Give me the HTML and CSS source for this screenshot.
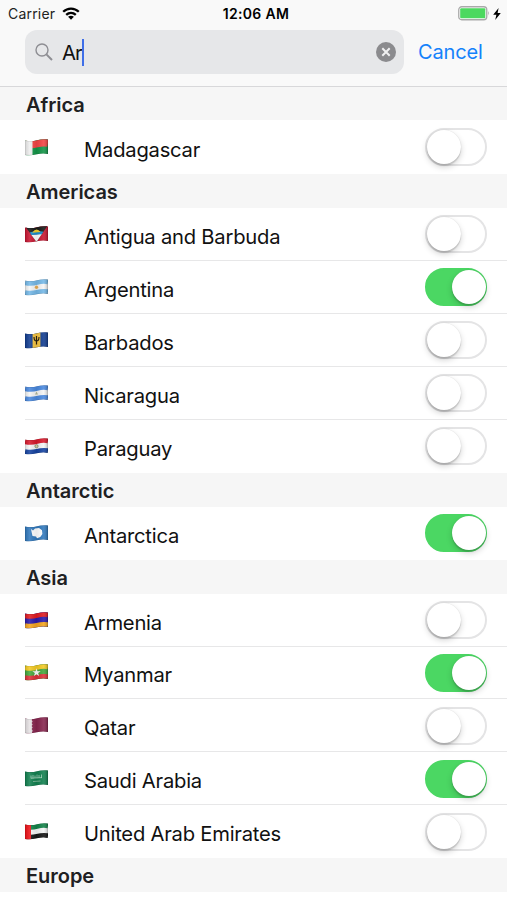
FILE: index.html
```html
<!DOCTYPE html>
<html lang="en">
<head>
<meta charset="utf-8">
<title>Countries</title>
<link rel="stylesheet" href="styles.css">
</head>
<body>
<svg class="defs" aria-hidden="true">
  <defs>
    <clipPath id="cloth"><path d="M0 1.5C4 2.3 8 2.3 12 1.2S20 0 23 .6V15C20 14.2 16 14.2 12 15.2S4 16.8 0 16Z"/></clipPath>
    <linearGradient id="shade"><stop offset="0" stop-color="#000" stop-opacity=".12"/><stop offset=".2" stop-color="#fff" stop-opacity=".12"/><stop offset=".5" stop-color="#000" stop-opacity=".08"/><stop offset=".8" stop-color="#fff" stop-opacity=".1"/><stop offset="1" stop-color="#000" stop-opacity=".25"/></linearGradient>
    <path id="wave" d="M0 0C4 .8 8 .8 12-.3S20-1.5 23-.9" fill="none"/>
    <g id="fold"><path d="M0 0H23V17H0Z" fill="url(#shade)"/><path d="M0 1.5C4 2.3 8 2.3 12 1.2S20 0 23 .6V15C20 14.2 16 14.2 12 15.2S4 16.8 0 16Z" fill="none" stroke="#000" stroke-opacity=".2" stroke-width=".7"/></g>
  </defs>
</svg>
<header class="top">
  <div class="status">
    <div class="carrier"><span class="carrier-name">Carrier</span>
      <svg class="wifi" viewBox="0 0 18 13"><g fill="none" stroke="#000" stroke-width="2.3"><path d="M1.2 4.8C5.6.5 12.4.5 16.8 4.8"/><path d="M4.2 7.9C7 5.3 11 5.3 13.8 7.9"/></g><path d="M6.1 9.8C7.8 8.4 10.2 8.4 11.9 9.8L9 12.7Z"/></svg>
    </div>
    <div class="clock">12:06 AM</div>
    <div class="power">
      <svg class="battery" viewBox="0 0 32 15"><rect x=".75" y=".75" width="28" height="13" rx="3" fill="#fff" stroke="#a9a9a9" stroke-width="1.3"/><rect x="2.2" y="2.2" width="25.1" height="10.1" rx="1" fill="#4cd95f"/><path d="M30.2 5Q32 7.2 30.2 9.5Z" fill="#a9a9a9"/></svg>
      <svg class="bolt" viewBox="0 0 8 12"><path d="M5.6 0L.2 6.8H3.4L2.2 12L7.8 5H4.6Z"/></svg>
    </div>
  </div>
  <div class="search">
    <div class="field">
      <svg class="glass" viewBox="0 0 18 18"><g fill="none" stroke="#8e8e93" stroke-width="1.4"><circle cx="7" cy="7" r="6"/><path d="M11.4 11.4L17 17" stroke-width="2"/></g></svg>
      <span class="query">Ar</span><i class="caret"></i>
      <svg class="clear" viewBox="0 0 20 20"><circle cx="10" cy="10" r="10" fill="#8b8b8e"/><path d="M6.3 6.3L13.7 13.7M13.7 6.3L6.3 13.7" stroke="#f1f1f2" stroke-width="2"/></svg>
    </div>
    <a class="cancel">Cancel</a>
  </div>
</header>
<main>
  <section>
    <h2>Africa</h2>
    <div class="row"><svg class="flag" viewBox="0 0 23 17"><g clip-path="url(#cloth)"><path d="M0 0H23V17H0Z" fill="#139548"/><use href="#wave" y="5" stroke="#f44444" stroke-width="7.5"/><path d="M0 0H7.5V17H0Z" fill="#eee"/><use href="#fold"/></g></svg><span class="name">Madagascar</span><i class="switch"></i></div>
  </section>
  <section>
    <h2>Americas</h2>
    <div class="row"><svg class="flag" viewBox="0 0 23 17"><g clip-path="url(#cloth)"><path d="M0 0H23V17H0Z" fill="#c91531"/><path d="M1 1.5L11.5 16L22 .5V0H1Z" fill="#171817"/><path d="M6.2 8.8L11.5 16L17 7.8Z" fill="#fff"/><path d="M4.8 6.5Q11.5 4 18.4 5.8L16.8 8.3L6.3 9Z" fill="#168dce"/><path d="M7.2 6.7Q11.5.5 15.5 6Z" fill="#f4cf28"/><use href="#fold"/></g></svg><span class="name">Antigua and Barbuda</span><i class="switch"></i></div>
    <div class="row"><svg class="flag" viewBox="0 0 23 17"><g clip-path="url(#cloth)"><path d="M0 0H23V17H0Z" fill="#f4f5f5"/><g stroke="#75b9e8" stroke-width="4.8"><use href="#wave" y="3.7"/><use href="#wave" y="13.7"/></g><circle cx="11.5" cy="8.3" r="1.7" fill="#e8ae55"/><use href="#fold"/></g></svg><span class="name">Argentina</span><i class="switch on"></i></div>
    <div class="row"><svg class="flag" viewBox="0 0 23 17"><g clip-path="url(#cloth)"><path d="M0 0H23V17H0Z" fill="#123d91"/><path d="M7.6 0H15.4V17H7.6Z" fill="#f5c543"/><path d="M9 5Q9 9 11.5 9T14 5M11.5 4V12.5" fill="none" stroke="#292010" stroke-width="1.2"/><use href="#fold"/></g></svg><span class="name">Barbados</span><i class="switch"></i></div>
    <div class="row"><svg class="flag" viewBox="0 0 23 17"><g clip-path="url(#cloth)"><path d="M0 0H23V17H0Z" fill="#f4f5f5"/><g stroke="#4a89df" stroke-width="4.8"><use href="#wave" y="3.7"/><use href="#wave" y="13.7"/></g><path d="M11.5 6.6L13 9.4H10Z" fill="#b1b99a"/><use href="#fold"/></g></svg><span class="name">Nicaragua</span><i class="switch"></i></div>
    <div class="row"><svg class="flag" viewBox="0 0 23 17"><g clip-path="url(#cloth)"><path d="M0 0H23V17H0Z" fill="#f4f5f5"/><use href="#wave" y="3.7" stroke="#d7192c" stroke-width="4.8"/><use href="#wave" y="13.7" stroke="#1644a2" stroke-width="4.8"/><circle cx="11.5" cy="8.2" r="1.6" fill="#ddd8a7" stroke="#777964" stroke-width=".7"/><use href="#fold"/></g></svg><span class="name">Paraguay</span><i class="switch"></i></div>
  </section>
  <section>
    <h2>Antarctic</h2>
    <div class="row"><svg class="flag" viewBox="0 0 23 17"><g clip-path="url(#cloth)"><path d="M0 0H23V17H0Z" fill="#3179bd"/><path d="M6 4L8 5.5L10 3.6L14 3L17 5.2L17.4 9L15.3 12L12 13.2L11 11.5L7.5 11L6.8 8Z" fill="#fff"/><use href="#fold"/></g></svg><span class="name">Antarctica</span><i class="switch on"></i></div>
  </section>
  <section>
    <h2>Asia</h2>
    <div class="row"><svg class="flag" viewBox="0 0 23 17"><g clip-path="url(#cloth)"><path d="M0 0H23V17H0Z" fill="#2b1aab"/><use href="#wave" y="3.7" stroke="#e11b22" stroke-width="4.8"/><use href="#wave" y="13.7" stroke="#f5a51f" stroke-width="4.8"/><use href="#fold"/></g></svg><span class="name">Armenia</span><i class="switch"></i></div>
    <div class="row"><svg class="flag" viewBox="0 0 23 17"><g clip-path="url(#cloth)"><path d="M0 0H23V17H0Z" fill="#45a83c"/><use href="#wave" y="3.7" stroke="#f4cb24" stroke-width="4.8"/><use href="#wave" y="13.7" stroke="#df3039" stroke-width="4.8"/><path d="M11.5 4.3L12.5 7.2H15.7L13.1 9L14.1 12.1L11.5 10.3L8.9 12.1L9.9 9L7.3 7.2H10.5Z" fill="#fff"/><use href="#fold"/></g></svg><span class="name">Myanmar</span><i class="switch on"></i></div>
    <div class="row"><svg class="flag" viewBox="0 0 23 17"><g clip-path="url(#cloth)"><path d="M0 0H23V17H0Z" fill="#87254e"/><path d="M0 0H6.6L7.6 1.5L6.6 3L7.6 4.5L6.6 6L7.6 7.5L6.6 9L7.6 10.5L6.6 12L7.6 13.5L6.6 17H0Z" fill="#e6e2e4"/><use href="#fold"/></g></svg><span class="name">Qatar</span><i class="switch"></i></div>
    <div class="row"><svg class="flag" viewBox="0 0 23 17"><g clip-path="url(#cloth)"><path d="M0 0H23V17H0Z" fill="#128150"/><path d="M6 5.5V8.5M8 5V8.5M10 5.5V8M12 4.5V8.2M14 5V8M16.5 4.5V8M6 8.2L17 7.6" stroke="#a5d4bb" stroke-width=".8"/><path d="M8 11.5L15.5 11" stroke="#8fc1a7" stroke-width=".8"/><use href="#fold"/></g></svg><span class="name">Saudi Arabia</span><i class="switch on"></i></div>
    <div class="row"><svg class="flag" viewBox="0 0 23 17"><g clip-path="url(#cloth)"><path d="M0 0H23V17H0Z" fill="#f4f5f5"/><use href="#wave" y="3.7" stroke="#138349" stroke-width="4.8"/><use href="#wave" y="13.7" stroke="#151515" stroke-width="4.8"/><path d="M0 0H6V17H0Z" fill="#ef1118"/><use href="#fold"/></g></svg><span class="name">United Arab Emirates</span><i class="switch"></i></div>
  </section>
  <section>
    <h2>Europe</h2>
  </section>
</main>
</body>
</html>
```
FILE: styles.css
```css
* { box-sizing: border-box; }
body {
  margin: 0;
  height: 900px;
  overflow: hidden;
  background: #fff;
  color: #111;
  font-family: Inter, "Liberation Sans", sans-serif;
}
.defs { position: absolute; width: 0; height: 0; }
svg { display: block; flex: none; }
.top {
  height: 87px;
  background: #f9f9f9;
  border-bottom: 1px solid #d8d8da;
}
.status {
  display: grid;
  grid-template-columns: 1fr auto 1fr;
  align-items: center;
  height: 27px;
  padding: 0 6px 0 8px;
  font-size: 14px;
  line-height: 27px;
}
.carrier { display: flex; align-items: center; gap: 7px; color: #222; }
.carrier-name { letter-spacing: .2px; }
.wifi { width: 18px; height: 13px; }
.clock { font-weight: 600; font-size: 14px; letter-spacing: .35px; color: #000; padding-left: 3px; }
.power { display: flex; align-items: center; justify-content: flex-end; gap: 3px; }
.battery { width: 32px; height: 15px; }
.bolt { width: 8px; height: 12px; }
.search { display: flex; align-items: center; padding: 3px 0 0 25px; }
.field {
  display: flex;
  flex: none;
  align-items: center;
  width: 379px;
  height: 44px;
  padding: 0 8px 0 10px;
  border-radius: 12px;
  background: #e6e7e9;
}
.glass { width: 18px; height: 18px; margin-right: 9px; }
.query { font-size: 20.3px; letter-spacing: -.9px; }
.caret { width: 2.5px; height: 27px; background: #3f6fe8; }
.clear { width: 20px; height: 20px; margin-left: auto; }
.cancel { margin-left: 14px; color: #1582fb; font-size: 20px; letter-spacing: -.15px; }
h2 {
  margin: 0;
  height: 34px;
  padding-left: 26px;
  background: #f6f6f6;
  color: #202022;
  font-size: 20px;
  font-weight: 600;
  line-height: 37px;
  letter-spacing: -.03px;
}
section:first-child h2 { height: 33.1px; line-height: 36px; }
.row {
  display: flex;
  align-items: center;
  height: 52.95px;
  margin-left: 25px;
  padding: .9px 20px 0 0;
  border-bottom: 1px solid #e7e7e8;
}
.row:last-child { border-bottom: 0; padding-top: 0; }
section:first-child .row { height: 53.9px; }
.flag { width: 23px; height: 17px; }
.name {
  margin-left: 36px;
  padding-top: 5px;
  font-size: 20.2px;
  line-height: 24px;
  letter-spacing: -.22px;
}
.switch {
  display: block;
  width: 62px;
  height: 38px;
  margin-left: auto;
  border: 2px solid #e4e4e5;
  border-radius: 19px;
  background: #fff;
}
.switch::before {
  content: "";
  display: block;
  width: 34px;
  height: 34px;
  border-radius: 50%;
  background: #fff;
  box-shadow: 0 3px 6px rgba(0,0,0,.18), 0 2px 1px rgba(0,0,0,.12), 0 0 1px rgba(0,0,0,.15);
}
.switch.on { background: #4bd763; border-color: #4bd763; }
.switch.on::before { margin-left: 24.5px; }
```
